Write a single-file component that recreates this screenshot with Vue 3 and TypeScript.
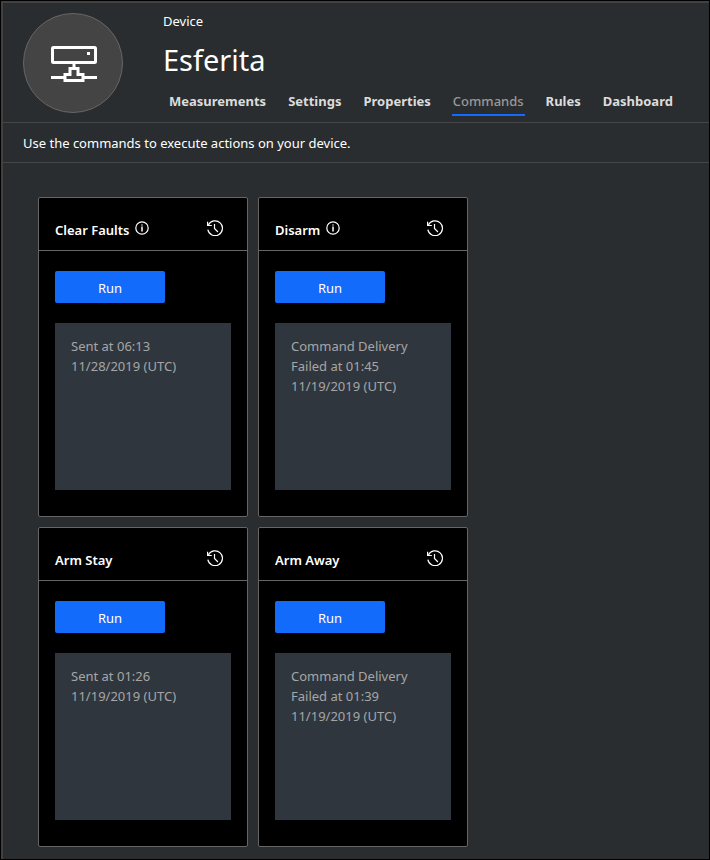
<script setup lang="ts">
interface Tab {
  label: string
  active?: boolean
}

interface Command {
  id: string
  name: string
  info: boolean
  status: string[]
}

const tabs: Tab[] = [
  { label: 'Measurements' },
  { label: 'Settings' },
  { label: 'Properties' },
  { label: 'Commands', active: true },
  { label: 'Rules' },
  { label: 'Dashboard' },
]

const commands: Command[] = [
  { id: 'clear-faults', name: 'Clear Faults', info: true, status: ['Sent at 06:13', '11/28/2019 (UTC)'] },
  { id: 'disarm', name: 'Disarm', info: true, status: ['Command Delivery', 'Failed at 01:45', '11/19/2019 (UTC)'] },
  { id: 'arm-stay', name: 'Arm Stay', info: false, status: ['Sent at 01:26', '11/19/2019 (UTC)'] },
  { id: 'arm-away', name: 'Arm Away', info: false, status: ['Command Delivery', 'Failed at 01:39', '11/19/2019 (UTC)'] },
]
</script>

<template>
  <div class="frame">
    <div class="page">
      <header class="device">
        <div class="avatar">
          <svg width="46" height="36" viewBox="0 0 46 36" fill="none" stroke="#fff" stroke-width="3" aria-hidden="true">
            <rect x="1.5" y="1.5" width="43" height="15" rx="1" />
            <rect x="36" y="6" width="3" height="3" fill="#fff" stroke="none" />
            <path d="M23 17v5M0 31.500h13M33 31.500h13" />
            <path d="M14 34.500v-6h5v-6h8v6h5v6z" />
          </svg>
        </div>
        <div class="heading">
          <p class="kind">Device</p>
          <h1 class="name">Esferita</h1>
          <nav class="tabs" aria-label="Device views">
            <a
              v-for="tab in tabs"
              :key="tab.label"
              href="#"
              class="tab"
              :class="{ active: tab.active }"
              :aria-current="tab.active ? 'page' : undefined"
            >{{ tab.label }}</a>
          </nav>
        </div>
      </header>
      <p class="hint">Use the commands to execute actions on your device.</p>
      <main class="cards">
        <article v-for="command in commands" :key="command.id" class="card">
          <div class="card-head">
            <h2 class="title">{{ command.name }}</h2>
            <button v-if="command.info" type="button" class="icon-button info" aria-label="Command information">
              <svg width="14" height="14" viewBox="0 0 14 14" fill="none" stroke="#fff" aria-hidden="true">
                <circle cx="7" cy="7" r="6.200" stroke-width="1.200" />
                <path d="M7 3.500v1M7 5.500v5" stroke-width="1.500" />
              </svg>
            </button>
            <button type="button" class="icon-button history" aria-label="Command history">
              <svg width="16" height="16" viewBox="0 0 16 16" fill="none" stroke="#fff" stroke-width="1.200" aria-hidden="true">
                <path d="M.8 9.700A7.400 7.400 0 1 0 1.400 5" />
                <path d="M.6 1.800v3.700h4.200" />
                <path d="M7.500 4v4.500l3.500 3.500" />
              </svg>
            </button>
          </div>
          <div class="card-body">
            <button type="button" class="run">Run</button>
            <div class="status">
              <div v-for="line in command.status" :key="line">{{ line }}</div>
            </div>
          </div>
        </article>
      </main>
    </div>
  </div>
</template>

<style>
body {
  margin: 0;
  background: #2a2d2f;
}
</style>

<style scoped>
.frame {
  box-sizing: border-box;
  min-height: 100vh;
  display: flex;
  border: 1px solid #000;
  background: #2a2d2f;
  color: #fff;
  font-family: "Noto Sans", "Open Sans", sans-serif;
  font-size: 13px;
  line-height: 20px;
}

.page {
  flex: 1;
  min-width: 0;
  border-top: 2px solid #414143;
  border-left: 2px solid #414143;
}

.device {
  display: flex;
  gap: 40px;
  padding: 10px 20px 0;
  height: 109px;
  border-bottom: 1px solid #444648;
}

.avatar {
  box-sizing: border-box;
  flex: none;
  display: flex;
  align-items: center;
  justify-content: center;
  width: 100px;
  height: 100px;
  padding: 2px 0 0 2px;
  border: 1px solid #666;
  border-radius: 50%;
  background: #444;
}

.heading {
  flex: 1;
  min-width: 0;
}

.kind {
  margin: 0;
  line-height: 16px;
}

.name {
  margin: 9px 0 0;
  font-size: 29px;
  font-weight: 400;
  line-height: 44px;
}

.tabs {
  display: flex;
  gap: 20px;
  margin-top: 9px;
  padding-left: 5px;
}

.tab {
  padding: 0 1px 3px;
  border-bottom: 2px solid transparent;
  color: #dcdcdc;
  font-weight: 700;
  text-decoration: none;
}

.tab.active {
  border-bottom-color: #136bfb;
  color: #999;
  font-weight: 500;
}

.hint {
  margin: 0;
  padding: 10px 20px 9px;
  border-bottom: 1px solid #444648;
}

.cards {
  display: grid;
  grid-template-columns: repeat(2, 210px);
  gap: 10px;
  padding: 34px 35px 12px;
}

.card {
  border: 1px solid #666;
  border-radius: 2px;
  background: #000;
}

.card-head {
  display: flex;
  align-items: center;
  gap: 6px;
  height: 40px;
  padding: 12px 24px 0 16px;
  border-bottom: 1px solid #666;
}

.title {
  margin: 0;
  font-size: 13px;
  font-weight: 600;
}

.icon-button {
  display: flex;
  padding: 0 0 4px;
  border: 0;
  background: none;
  cursor: pointer;
}

.history {
  margin-left: auto;
}

.card-body {
  padding: 20px 16px 26px;
}

.run {
  display: block;
  width: 110px;
  height: 32px;
  padding: 2px 0 0;
  border: 0;
  border-radius: 2px;
  background: #136bfb;
  color: #fff;
  font: inherit;
  cursor: pointer;
}

.status {
  box-sizing: border-box;
  min-height: 167px;
  margin-top: 20px;
  padding: 13px 16px;
  background: #30363d;
  color: #a6a6a6;
}
</style>
